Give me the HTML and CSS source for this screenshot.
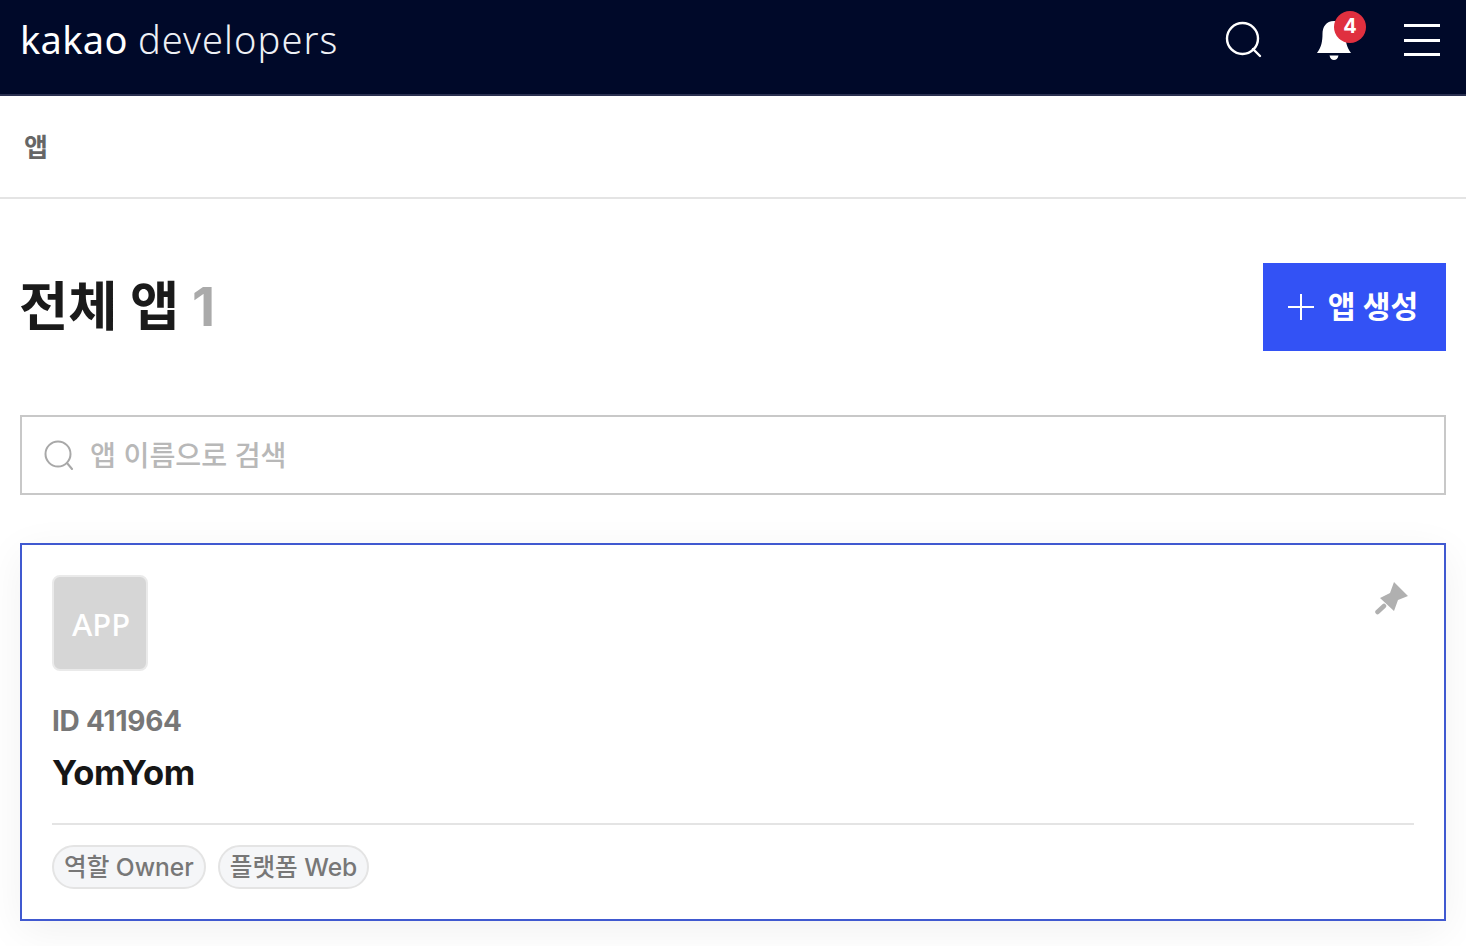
FILE: index.html
```html
<!DOCTYPE html>
<html lang="ko">
<head>
<meta charset="utf-8">
<title>kakao developers</title>
<link rel="stylesheet" href="styles.css">
</head>
<body>
<header class="topbar">
  <a class="logo"><span class="logo-kakao">kakao</span> <span class="logo-dev">developers</span></a>
  <div class="top-icons">
    <svg class="ic-search" width="38" height="38" viewBox="0 0 38 38"><circle cx="17.5" cy="17.5" r="15.5" fill="none" stroke="#fff" stroke-width="2.4"/><path d="M28 28l7 7" stroke="#fff" stroke-width="2.4" stroke-linecap="round"/></svg>
    <div class="bell">
      <svg width="36" height="42" viewBox="0 0 36 42"><path d="M18 2C10 2 6.500 8 6.500 15c0 7-1 13-5.500 19h34c-4.500-6-5.500-12-5.500-19C29.500 8 26 2 18 2z" fill="#fff"/><path d="M13.500 36.500h9c-.5 3-2.500 4.500-4.500 4.500s-4-1.500-4.500-4.500z" fill="#fff"/></svg>
      <span class="badge">4</span>
    </div>
    <div class="burger"><i></i><i></i><i></i></div>
  </div>
</header>
<nav class="crumb"><span>앱</span></nav>
<main class="content">
  <div class="title-row">
    <h1 class="title">전체 앱 <span class="count">1</span></h1>
    <button class="create"><svg width="28" height="28" viewBox="0 0 28 28"><path d="M14 1v26M1 14h26" stroke="#fff" stroke-width="2"/></svg><span>앱 생성</span></button>
  </div>
  <div class="search">
    <svg width="30" height="30" viewBox="0 0 30 30"><circle cx="14" cy="14" r="12.500" fill="none" stroke="#a8a8a8" stroke-width="2"/><path d="M23 23l5 6" stroke="#a8a8a8" stroke-width="2" stroke-linecap="round"/></svg>
    <span class="placeholder">앱 이름으로 검색</span>
  </div>
  <article class="card">
    <div class="card-top">
      <div class="app-icon">APP</div>
      <svg class="pin" width="36" height="36" viewBox="0 0 36 36"><path d="M19 3l14 14-10 4-4 11L5 19l10-5z" fill="#b0b0b0"/><path d="M2.500 33L9 27" stroke="#b0b0b0" stroke-width="4.500" stroke-linecap="round"/></svg>
    </div>
    <div class="app-id">ID 411964</div>
    <div class="app-name">YomYom</div>
    <div class="tags">
      <span class="tag">역할 Owner</span>
      <span class="tag">플랫폼 Web</span>
    </div>
  </article>
</main>
</body>
</html>
```
FILE: styles.css
```css
* { box-sizing: border-box; }
html, body { margin: 0; padding: 0; }
body {
  height: 946px;
  overflow: hidden;
  background: #fff;
  font-family: Inter, "Noto Sans CJK KR", sans-serif;
}
.topbar {
  height: 96px;
  background: #000929;
  border-bottom: 2px solid #2a3050;
  display: flex;
  justify-content: space-between;
  padding: 0 26px 0 20px;
}
.logo {
  font-family: "Noto Sans", sans-serif;
  font-size: 38px;
  line-height: 78px;
  color: #fff;
  white-space: nowrap;
  letter-spacing: .3px;
}
.logo-kakao { font-weight: 400; }
.logo-dev { font-weight: 300; color: #eef0f5; letter-spacing: 1.1px; }
.top-icons { display: flex; align-items: flex-start; }
.ic-search { margin-top: 21px; margin-right: 53px; }
.bell { position: relative; margin-top: 19px; margin-right: 52px; width: 36px; height: 42px; }
.badge {
  position: absolute;
  top: -8px;
  left: 18px;
  width: 32px;
  height: 32px;
  border-radius: 50%;
  background: #e0303f;
  color: #fff;
  font-size: 20px;
  font-weight: 700;
  line-height: 31px;
  text-align: center;
}
.burger { margin-top: 24px; width: 36px; height: 32px; display: flex; flex-direction: column; justify-content: space-between; }
.burger i { display: block; height: 3px; background: #fff; }
.crumb {
  height: 103px;
  border-bottom: 2px solid #e4e4e4;
  padding: 0 24px 2px;
  display: flex;
  align-items: center;
  font-size: 26px;
  font-weight: 700;
  color: #666;
}
.content { padding: 0 20px; }
.title-row {
  height: 216px;
  padding-top: 64px;
  display: flex;
  justify-content: space-between;
  align-items: flex-start;
}
.title {
  margin: 0;
  font-size: 53.5px;
  font-weight: 700;
  line-height: 88px;
  color: #1a1a1a;
  margin-left: -1px;
}
.count { color: #aaa; }
.create {
  width: 183px;
  height: 88px;
  background: #3352f5;
  border: 0;
  color: #fff;
  font-family: inherit;
  font-size: 30.2px;
  font-weight: 700;
  display: flex;
  align-items: center;
  justify-content: center;
  gap: 13px;
  padding: 0 4px 4px 0;
}
.create svg { margin-top: 4px; }
.search {
  height: 80px;
  border: 2px solid #c8c8c8;
  display: flex;
  align-items: center;
  gap: 16px;
  padding: 0 22px 4px;
}
.search { margin-bottom: 48px; }
.search svg { margin-top: 4px; }
.placeholder { font-size: 28.2px; font-weight: 500; color: #b8b8b8; }
.card {
  height: 378px;
  border: 2px solid #4059d0;
  padding: 30px;
  box-shadow: 0 10px 40px rgba(0,0,0,.06);
}
.card-top { display: flex; justify-content: space-between; align-items: flex-start; height: 96px; padding-right: 3px; }
.app-icon {
  width: 96px;
  height: 96px;
  border: 2px solid #eaeaea;
  border-radius: 8px;
  background: #d6d6d6;
  color: #fff;
  font-family: "Noto Sans", sans-serif;
  font-size: 31px;
  font-weight: 500;
  line-height: 94px;
  padding-left: 2px;
  text-align: center;
}
.pin { margin-top: 4px; }
.app-id { margin-top: 33px; font-size: 28px; font-weight: 700; line-height: 34px; color: #777; letter-spacing: -.25px; }
.app-name { margin-top: 14px; font-size: 34.500px; font-weight: 700; line-height: 42px; color: #161616; padding-bottom: 29px; border-bottom: 2px solid #e4e4e4; letter-spacing: -.3px; }
.tags { display: flex; gap: 12px; margin-top: 20px; }
.tag {
  height: 44px;
  padding: 0 10px;
  border: 2px solid #e4e4e4;
  border-radius: 22px;
  background: #f5f6f8;
  color: #777;
  font-size: 24.6px;
  font-weight: 500;
  line-height: 41px;
  white-space: nowrap;
}
```
